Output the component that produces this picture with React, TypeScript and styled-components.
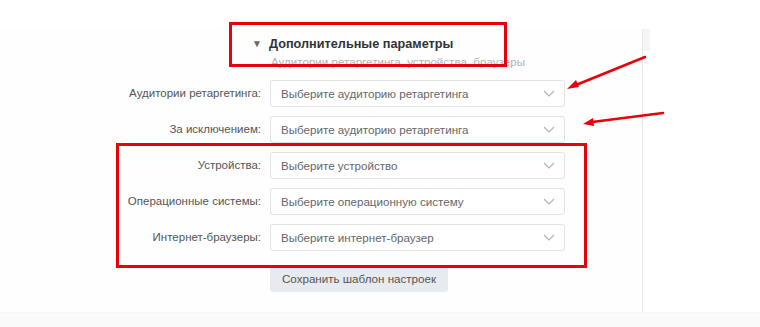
import React from 'react'
import styled, { createGlobalStyle } from 'styled-components'

const Global = createGlobalStyle`
  html, body { margin: 0; padding: 0; background: #fff; }
  body { font-family: "Liberation Sans", Arial, sans-serif; }
`

const Page = styled.div`
  position: relative;
  width: 760px;
  height: 327px;
  display: flex;
  flex-direction: column;
  overflow: hidden;
`

const Main = styled.div`
  flex: 1;
  display: flex;
  padding-top: 29px;
`

const Panel = styled.div`
  width: 643px;
  border-right: 1px solid #e8e8e8;
  background: #fefefe;
  padding-top: 7px;
  box-sizing: border-box;
`

const Side = styled.div`
  flex: 1;
`

const SidePatch = styled.div`
  width: 7px;
  height: 22px;
  background: #f5f5f5;
`

const Footer = styled.div`
  height: 14px;
  background: #fafafa;
  border-top: 1px solid #f6f6f6;
`

const Header = styled.div`
  display: flex;
  align-items: center;
  padding-left: 252px;
  height: 16px;
`

const Caret = styled.span`
  font-size: 10px;
  color: #666;
  width: 17px;
  line-height: 16px;
`

const Title = styled.span`
  font-size: 12.7px;
  font-weight: bold;
  color: #333;
  line-height: 16px;
`

const Subtitle = styled.div`
  margin-top: 3px;
  padding-left: 271px;
  font-size: 11.6px;
  line-height: 14px;
  color: #b3b3b3;
  white-space: nowrap;
`

const Form = styled.div`
  margin-top: 11px;
  display: grid;
  grid-template-columns: 261px 295px;
  column-gap: 9px;
  row-gap: 9px;
`

const Label = styled.div`
  text-align: right;
  font-size: 11.5px;
  color: #555;
  line-height: 27px;
  white-space: nowrap;
`

const Select = styled.div`
  height: 27px;
  box-sizing: border-box;
  border: 1px solid #e2e2e2;
  border-radius: 3px;
  background: #fff;
  display: flex;
  align-items: center;
  justify-content: space-between;
  padding: 0 9px 0 10px;
  font-size: 11.6px;
  color: #666;
`

const Chevron = () => (
  <svg width="12" height="7" viewBox="0 0 12 7">
    <path d="M1 1l5 5 5-5" fill="none" stroke="#b5b5b5" strokeWidth="1.2" />
  </svg>
)

const Actions = styled.div`
  margin-top: 14px;
  padding-left: 270px;
`

const SaveButton = styled.div`
  width: 178px;
  height: 27px;
  background: #e7eaef;
  border-radius: 3px;
  font-size: 11.6px;
  color: #555;
  display: flex;
  align-items: center;
  justify-content: center;
`

const Mark = styled.div<{ $x: number; $y: number; $w: number; $h: number }>`
  position: absolute;
  left: ${p => p.$x}px;
  top: ${p => p.$y}px;
  width: ${p => p.$w}px;
  height: ${p => p.$h}px;
  border: 3px solid #e8000b;
  box-sizing: border-box;
  pointer-events: none;
`

const Arrows = styled.svg`
  position: absolute;
  left: 0;
  top: 0;
  pointer-events: none;
`

const rows = [
  ['Аудитории ретаргетинга:', 'Выберите аудиторию ретаргетинга'],
  ['За исключением:', 'Выберите аудиторию ретаргетинга'],
  ['Устройства:', 'Выберите устройство'],
  ['Операционные системы:', 'Выберите операционную систему'],
  ['Интернет-браузеры:', 'Выберите интернет-браузер'],
]

export default function App() {
  return (
    <Page>
      <Global />
      <Main>
        <Panel>
          <Header>
            <Caret>▼</Caret>
            <Title>Дополнительные параметры</Title>
          </Header>
          <Subtitle>Аудитории ретаргетинга, устройства, браузеры</Subtitle>
          <Form>
            {rows.map(([label, placeholder], i) => (
              <React.Fragment key={i}>
                <Label>{label}</Label>
                <Select>
                  <span>{placeholder}</span>
                  <Chevron />
                </Select>
              </React.Fragment>
            ))}
          </Form>
          <Actions>
            <SaveButton>Сохранить шаблон настроек</SaveButton>
          </Actions>
        </Panel>
        <Side>
          <SidePatch />
        </Side>
      </Main>
      <Footer />

      <Mark $x={229} $y={22} $w={278} $h={45} />
      <Mark $x={116} $y={143} $w={471} $h={125} />
      <Arrows width="760" height="327">
        <g stroke="#e8000b" strokeWidth="2.5" strokeLinecap="round" fill="#e8000b">
          <line x1="645" y1="57" x2="576" y2="85" />
          <path d="M567 89l9-9 3 7z" stroke="none" />
          <line x1="663" y1="113" x2="592" y2="122" />
          <path d="M583 124l10-6 1 8z" stroke="none" />
        </g>
      </Arrows>
    </Page>
  )
}
